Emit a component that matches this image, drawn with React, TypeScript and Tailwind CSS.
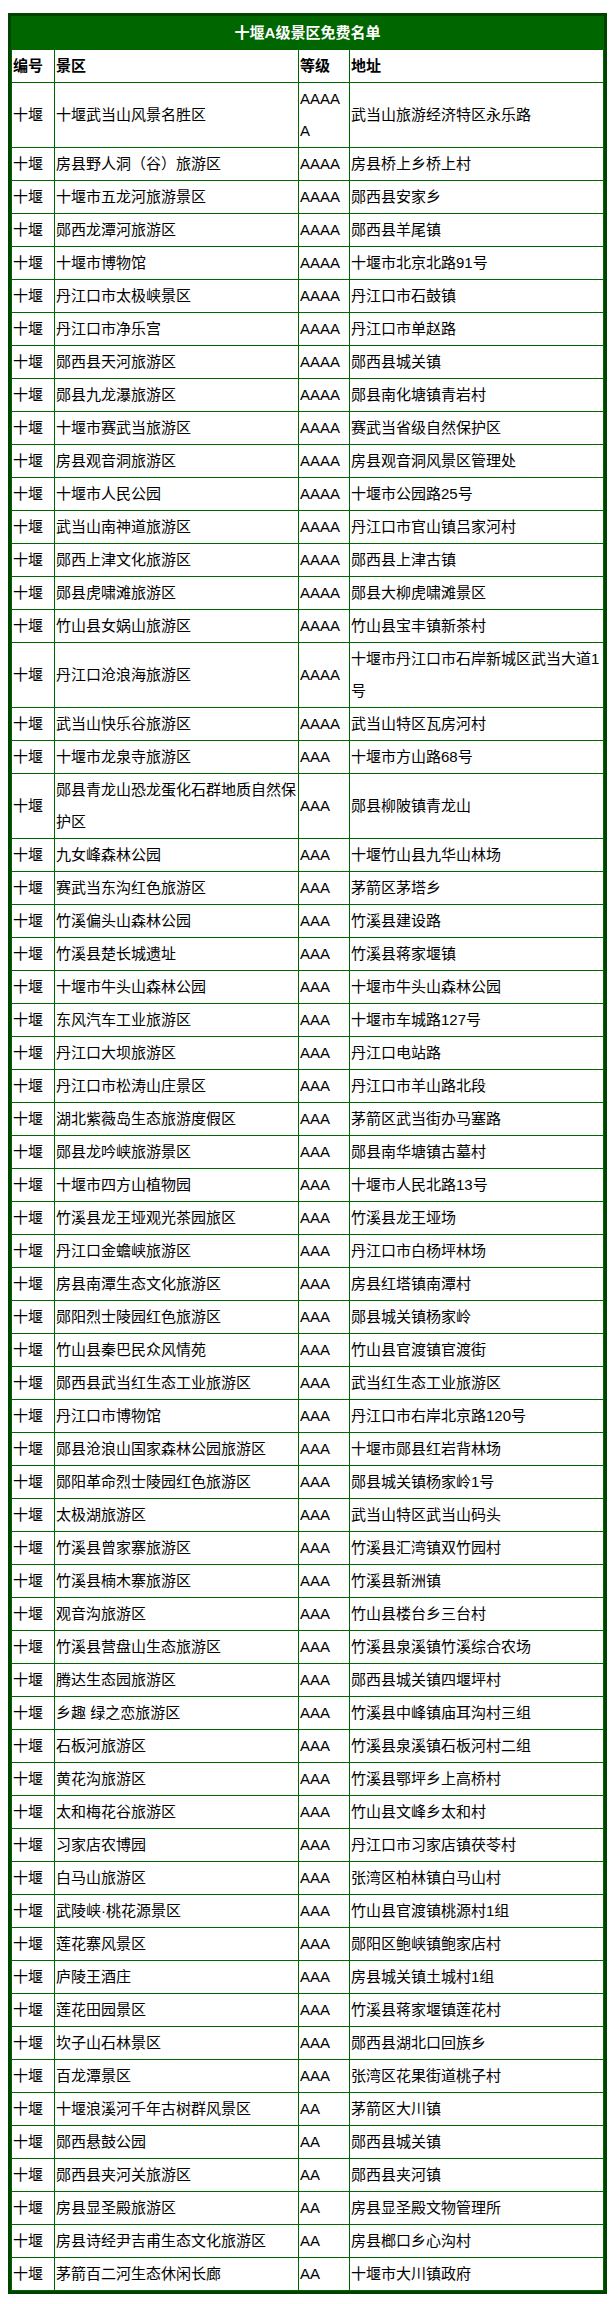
import React from "react";

type Row = [string, string, string];

const rows: Row[] = [
  ["十堰武当山风景名胜区", "AAAAA", "武当山旅游经济特区永乐路"],
  ["房县野人洞（谷）旅游区", "AAAA", "房县桥上乡桥上村"],
  ["十堰市五龙河旅游景区", "AAAA", "郧西县安家乡"],
  ["郧西龙潭河旅游区", "AAAA", "郧西县羊尾镇"],
  ["十堰市博物馆", "AAAA", "十堰市北京北路91号"],
  ["丹江口市太极峡景区", "AAAA", "丹江口市石鼓镇"],
  ["丹江口市净乐宫", "AAAA", "丹江口市单赵路"],
  ["郧西县天河旅游区", "AAAA", "郧西县城关镇"],
  ["郧县九龙瀑旅游区", "AAAA", "郧县南化塘镇青岩村"],
  ["十堰市赛武当旅游区", "AAAA", "赛武当省级自然保护区"],
  ["房县观音洞旅游区", "AAAA", "房县观音洞风景区管理处"],
  ["十堰市人民公园", "AAAA", "十堰市公园路25号"],
  ["武当山南神道旅游区", "AAAA", "丹江口市官山镇吕家河村"],
  ["郧西上津文化旅游区", "AAAA", "郧西县上津古镇"],
  ["郧县虎啸滩旅游区", "AAAA", "郧县大柳虎啸滩景区"],
  ["竹山县女娲山旅游区", "AAAA", "竹山县宝丰镇新茶村"],
  ["丹江口沧浪海旅游区", "AAAA", "十堰市丹江口市石岸新城区武当大道1号"],
  ["武当山快乐谷旅游区", "AAAA", "武当山特区瓦房河村"],
  ["十堰市龙泉寺旅游区", "AAA", "十堰市方山路68号"],
  ["郧县青龙山恐龙蛋化石群地质自然保护区", "AAA", "郧县柳陂镇青龙山"],
  ["九女峰森林公园", "AAA", "十堰竹山县九华山林场"],
  ["赛武当东沟红色旅游区", "AAA", "茅箭区茅塔乡"],
  ["竹溪偏头山森林公园", "AAA", "竹溪县建设路"],
  ["竹溪县楚长城遗址", "AAA", "竹溪县蒋家堰镇"],
  ["十堰市牛头山森林公园", "AAA", "十堰市牛头山森林公园"],
  ["东风汽车工业旅游区", "AAA", "十堰市车城路127号"],
  ["丹江口大坝旅游区", "AAA", "丹江口电站路"],
  ["丹江口市松涛山庄景区", "AAA", "丹江口市羊山路北段"],
  ["湖北紫薇岛生态旅游度假区", "AAA", "茅箭区武当街办马塞路"],
  ["郧县龙吟峡旅游景区", "AAA", "郧县南华塘镇古墓村"],
  ["十堰市四方山植物园", "AAA", "十堰市人民北路13号"],
  ["竹溪县龙王垭观光茶园旅区", "AAA", "竹溪县龙王垭场"],
  ["丹江口金蟾峡旅游区", "AAA", "丹江口市白杨坪林场"],
  ["房县南潭生态文化旅游区", "AAA", "房县红塔镇南潭村"],
  ["郧阳烈士陵园红色旅游区", "AAA", "郧县城关镇杨家岭"],
  ["竹山县秦巴民众风情苑", "AAA", "竹山县官渡镇官渡街"],
  ["郧西县武当红生态工业旅游区", "AAA", "武当红生态工业旅游区"],
  ["丹江口市博物馆", "AAA", "丹江口市右岸北京路120号"],
  ["郧县沧浪山国家森林公园旅游区", "AAA", "十堰市郧县红岩背林场"],
  ["郧阳革命烈士陵园红色旅游区", "AAA", "郧县城关镇杨家岭1号"],
  ["太极湖旅游区", "AAA", "武当山特区武当山码头"],
  ["竹溪县曾家寨旅游区", "AAA", "竹溪县汇湾镇双竹园村"],
  ["竹溪县楠木寨旅游区", "AAA", "竹溪县新洲镇"],
  ["观音沟旅游区", "AAA", "竹山县楼台乡三台村"],
  ["竹溪县营盘山生态旅游区", "AAA", "竹溪县泉溪镇竹溪综合农场"],
  ["腾达生态园旅游区", "AAA", "郧西县城关镇四堰坪村"],
  ["乡趣 绿之恋旅游区", "AAA", "竹溪县中峰镇庙耳沟村三组"],
  ["石板河旅游区", "AAA", "竹溪县泉溪镇石板河村二组"],
  ["黄花沟旅游区", "AAA", "竹溪县鄂坪乡上高桥村"],
  ["太和梅花谷旅游区", "AAA", "竹山县文峰乡太和村"],
  ["习家店农博园", "AAA", "丹江口市习家店镇茯苓村"],
  ["白马山旅游区", "AAA", "张湾区柏林镇白马山村"],
  ["武陵峡·桃花源景区", "AAA", "竹山县官渡镇桃源村1组"],
  ["莲花寨风景区", "AAA", "郧阳区鲍峡镇鲍家店村"],
  ["庐陵王酒庄", "AAA", "房县城关镇土城村1组"],
  ["莲花田园景区", "AAA", "竹溪县蒋家堰镇莲花村"],
  ["坎子山石林景区", "AAA", "郧西县湖北口回族乡"],
  ["百龙潭景区", "AAA", "张湾区花果街道桃子村"],
  ["十堰浪溪河千年古树群风景区", "AA", "茅箭区大川镇"],
  ["郧西悬鼓公园", "AA", "郧西县城关镇"],
  ["郧西县夹河关旅游区", "AA", "郧西县夹河镇"],
  ["房县显圣殿旅游区", "AA", "房县显圣殿文物管理所"],
  ["房县诗经尹吉甫生态文化旅游区", "AA", "房县榔口乡心沟村"],
  ["茅箭百二河生态休闲长廊", "AA", "十堰市大川镇政府"],
];

function TableRow({
  cells,
  last,
  header,
}: {
  cells: string[];
  last: boolean;
  header?: boolean;
}) {
  const base =
    "flex items-center px-px leading-[32px] break-all " +
    (header ? "font-bold" : "");
  return (
    <div
      className={
        "flex items-stretch " + (last ? "" : "border-b border-[#006600]")
      }
    >
      <div className={base + " w-[43px] shrink-0 border-r border-[#006600]"}>
        {cells[0]}
      </div>
      <div className={base + " w-[244px] shrink-0 border-r border-[#006600]"}>
        {cells[1]}
      </div>
      <div className={base + " w-[51px] shrink-0 border-r border-[#006600]"}>
        {cells[2]}
      </div>
      <div className={base + " flex-1 min-w-0"}>{cells[3]}</div>
    </div>
  );
}

export default function App() {
  return (
    <div
      className="bg-white min-h-[2304px] pt-[13px] pl-[8px] text-black text-[15px]"
      style={{ fontFamily: '"Liberation Sans", "Noto Sans CJK SC", sans-serif' }}
    >
      <div className="w-[599px] border-[3px] border-[#004400]">
        <div className="border border-[#006600]">
          <div className="h-[33px] bg-[#006600] flex items-center justify-center text-white font-bold text-[15px]">
            十堰A级景区免费名单
          </div>
          <TableRow cells={["编号", "景区", "等级", "地址"]} last={false} header />
          {rows.map((r, i) => (
            <TableRow
              key={i}
              cells={["十堰", r[0], r[1], r[2]]}
              last={i === rows.length - 1}
            />
          ))}
        </div>
      </div>
    </div>
  );
}
